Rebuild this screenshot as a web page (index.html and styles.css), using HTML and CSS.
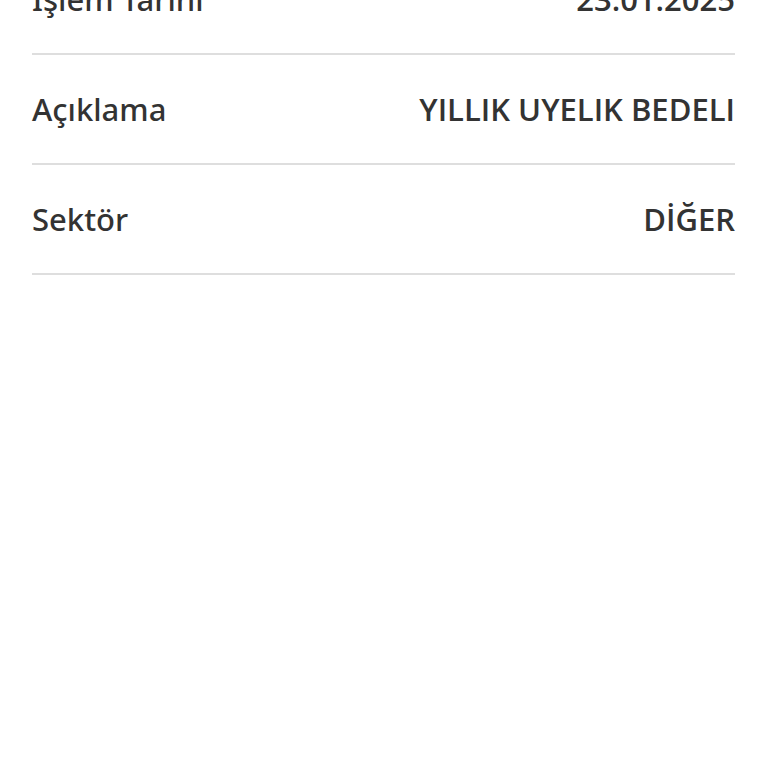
FILE: index.html
```html
<!DOCTYPE html>
<html lang="tr">

<head>
    <meta charset="UTF-8">
    <meta name="viewport" content="width=device-width, initial-scale=1.0">
    <title>İşlem Detayı</title>

    <link rel="stylesheet" href="styles.css">

</head>
<body>

    <div class="details">
        <div class="row">
            <span class="label">İşlem Tarihi</span>
            <span class="value">23.01.2025</span>
        </div>
        <div class="row">
            <span class="label">Açıklama</span>
            <span class="value">YILLIK UYELIK BEDELI</span>
        </div>
        <div class="row">
            <span class="label">Sektör</span>
            <span class="value">DİĞER</span>
        </div>
    </div>

</body>
</html>
```

FILE: styles.css
```css
body {
    margin: 0;
    background-color: #fff;
    color: #333;
}

.details {
    margin-top: -55px;
    padding: 0 33px 0 32px;
}

.row {
    display: flex;
    justify-content: space-between;
    align-items: center;
    height: 108px;
    border-bottom: 2px solid #dedede;
}

.label {
    font-family: 'Noto Sans', sans-serif;
    font-size: 31px;
    font-weight: 500;
}

.value {
    font-family: 'Open Sans', sans-serif;
    font-size: 31px;
    font-weight: 600;
}
```
